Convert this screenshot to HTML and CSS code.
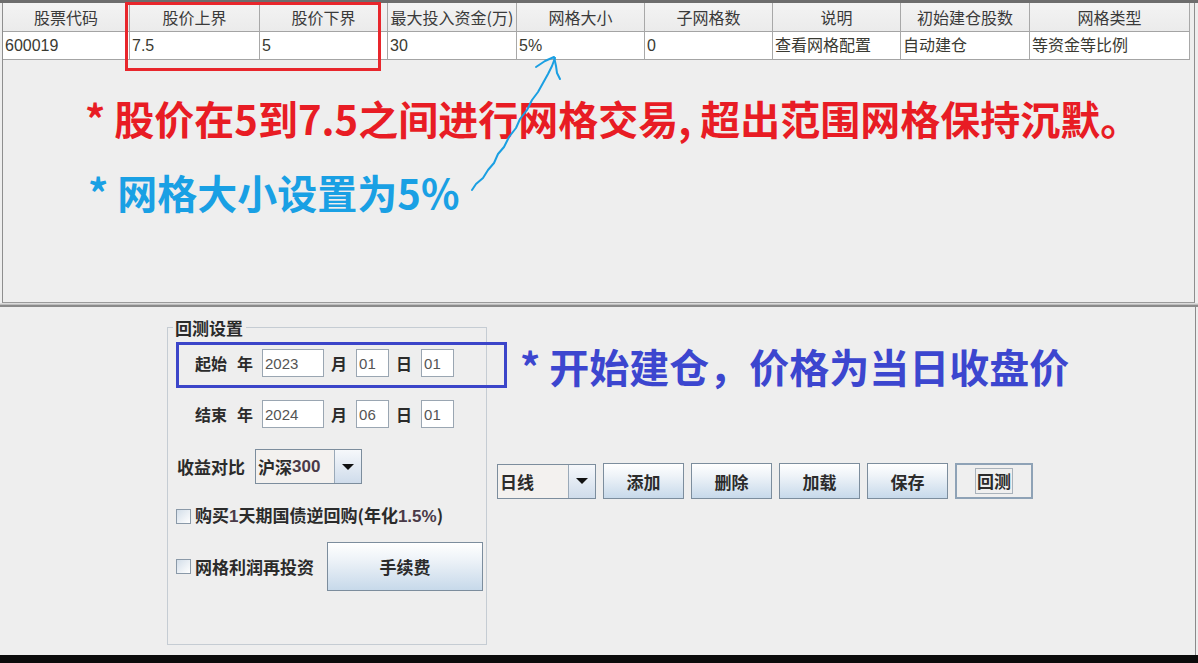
FILE: index.html
```html
<!DOCTYPE html>
<html lang="zh-CN">
<head>
<meta charset="utf-8">
<title>网格回测</title>
<link rel="stylesheet" href="styles.css">
</head>
<body>
<div class="app">
  <div class="top">
    <div class="scroll">
      <table class="grid">
        <colgroup>
          <col class="c1"><col class="c2"><col class="c3"><col class="c4"><col class="c5"><col class="c6"><col class="c7"><col class="c8"><col class="c9">
        </colgroup>
        <thead>
          <tr>
            <th>股票代码</th><th>股价上界</th><th>股价下界</th><th>最大投入资金(万)</th><th>网格大小</th><th>子网格数</th><th>说明</th><th>初始建仓股数</th><th>网格类型</th>
          </tr>
        </thead>
        <tbody>
          <tr>
            <td>600019</td><td>7.5</td><td>5</td><td>30</td><td>5%</td><td>0</td><td>查看网格配置</td><td>自动建仓</td><td>等资金等比例</td>
          </tr>
        </tbody>
      </table>
    </div>
  </div>
  <div class="divider"></div>
  <div class="bottom">
    <fieldset class="group">
      <legend class="legend">回测设置</legend>
      <div class="date-row first">
        <span class="lbl dlbl">起始</span>
        <span class="lbl dlbl unit-y">年</span>
        <input class="field year" value="2023">
        <span class="lbl dlbl unit">月</span>
        <input class="field small" value="01">
        <span class="lbl dlbl unit">日</span>
        <input class="field small" value="01">
      </div>
      <div class="date-row second">
        <span class="lbl dlbl">结束</span>
        <span class="lbl dlbl unit-y">年</span>
        <input class="field year" value="2024">
        <span class="lbl dlbl unit">月</span>
        <input class="field small" value="06">
        <span class="lbl dlbl unit">日</span>
        <input class="field small" value="01">
      </div>
      <div class="cmp-row">
        <span class="lbl">收益对比</span>
        <div class="combo bench">
          <span class="combo-text">沪深<span class="num">300</span></span>
          <span class="combo-btn"><span class="tri"></span></span>
        </div>
      </div>
      <div class="cb-row">
        <span class="cb"></span>
        <span class="lbl cb-lbl">购买<span class="num">1</span>天期国债逆回购(年化<span class="num">1.5%</span>)</span>
      </div>
      <div class="cb-row fee-row">
        <span class="cb"></span>
        <span class="lbl cb-lbl">网格利润再投资</span>
        <button class="btn fee">手续费</button>
      </div>
    </fieldset>
    <div class="toolbar">
      <div class="combo period">
        <span class="combo-text">日线</span>
        <span class="combo-btn"><span class="tri"></span></span>
      </div>
      <button class="btn">添加</button>
      <button class="btn">删除</button>
      <button class="btn">加载</button>
      <button class="btn">保存</button>
      <button class="btn focused"><span class="focus-ring">回测</span></button>
    </div>
  </div>
  <div class="taskbar"></div>

  <div class="mark red-box"></div>
  <div class="mark blue-box"></div>
  <div class="note note-red">* 股价在5到7.5之间进行网格交易, 超出范围网格保持沉默。</div>
  <div class="note note-cyan">* 网格大小设置为5%</div>
  <div class="note note-blue">* 开始建仓，价格为当日收盘价</div>
  <svg class="arrow" width="1198" height="663" viewBox="0 0 1198 663">
    <path d="M472 190 L476 184 L483 178 L488 170 L494 163 L498 154 L504 147 L509 137 L516 128 L520 119 L527 110 L532 100 L538 92 L543 83 L548 74 L552 66 L555 58" fill="none" stroke="#1a9fe2" stroke-width="2" stroke-linecap="round" stroke-linejoin="round"/>
    <path d="M536 67 L545 61 L554 57 L556 66 L557 73 L560 79" fill="none" stroke="#1a9fe2" stroke-width="2" stroke-linecap="round" stroke-linejoin="round"/>
  </svg>
</div>
</body>
</html>
```
FILE: styles.css
```css
* { box-sizing: border-box; }
html, body { margin: 0; padding: 0; }
body {
  width: 1198px;
  height: 663px;
  overflow: hidden;
  background: #eeeeee;
  font-family: "Noto Sans CJK SC", "Liberation Sans", sans-serif;
  color: #333;
}
.app {
  position: relative;
  width: 1198px;
  height: 663px;
  display: flex;
  flex-direction: column;
}
.top {
  border-top: 3px solid #6d6d6d;
  height: 303px;
}
.scroll {
  margin-left: 2px;
  width: 1193px;
  height: 300px;
  border-left: 1px solid #8e8e8e;
  border-right: 1px solid #8e8e8e;
  border-bottom: 1px solid #9a9a9a;
  background: #eeeeee;
}
.grid {
  table-layout: fixed;
  border-collapse: separate;
  border-spacing: 0;
  width: 1187px;
  font-size: 16px;
}
.c1 { width: 127px; }
.c2 { width: 130px; }
.c3 { width: 128px; }
.c4 { width: 129px; }
.c5 { width: 128px; }
.c6 { width: 128px; }
.c7 { width: 128px; }
.c8 { width: 129px; }
.c9 { width: 160px; }
.grid th {
  height: 29px;
  padding: 0 2px;
  font-weight: 400;
  color: #3a3a3a;
  background: linear-gradient(#f3f3f3, #ebebeb);
  border-right: 1px solid #a8a8a8;
  border-bottom: 1px solid #a4a4a4;
  text-align: center;
  white-space: nowrap;
  overflow: hidden;
  font-family: "Noto Sans CJK SC", sans-serif;
  line-height: 20px;
}
.grid td {
  height: 28px;
  padding: 0 2px;
  background: #ffffff;
  border-right: 1px solid #a8a8a8;
  border-bottom: 1px solid #a4a4a4;
  white-space: nowrap;
  overflow: hidden;
  color: #3a3a32;
  font-family: "Liberation Sans", "Noto Sans CJK SC", sans-serif;
  line-height: 20px;
}
.divider {
  height: 4px;
  border-top: 1px solid #dcdcdc;
  border-bottom: 2px solid #8a8a8a;
  background: #bdbdbd;
}
.bottom {
  height: 348px;
  display: flex;
  align-items: flex-start;
  border-right: 1px solid #8a8a8a;
  width: 1196px;
}
.group {
  margin: 13px 0 0 167px;
  padding: 0;
  width: 320px;
  height: 325px;
  border: 1px solid #c5ccd3;
  min-width: 0;
}
.legend {
  margin-left: 5px;
  padding: 0 3px 0 2px;
  font-size: 17px;
  font-weight: 700;
  line-height: 15px;
  color: #2a2a2a;
}
.lbl {
  font-size: 17px;
  font-weight: 700;
  color: #2b2b2b;
  white-space: nowrap;
  line-height: 20px;
}
.dlbl { font-size: 16px; }
.num { font-family: "Liberation Sans", sans-serif; color: #4a3a48; }
.date-row {
  display: flex;
  align-items: center;
  height: 28px;
  padding-left: 27px;
}
.date-row.first { margin-top: 14px; }
.date-row.second { margin-top: 23px; }
.unit-y { margin-left: 10px; }
.unit { margin-left: 7px; }
.field {
  height: 28px;
  margin-left: 9px;
  border: 1px solid #9aa6b2;
  background: #ffffff;
  font-family: "Liberation Sans", sans-serif;
  font-size: 15px;
  color: #555;
  padding: 0 2px;
}
.field.year { width: 62px; }
.field.small { width: 33px; }
.cmp-row {
  display: flex;
  align-items: center;
  margin-top: 21px;
  height: 35px;
  padding-left: 9px;
}
.combo {
  display: flex;
  height: 35px;
  border: 1px solid #7c8d9d;
  background: #f3f1ef;
}
.combo.bench { width: 107px; margin-left: auto; margin-right: 124px; }
.combo-text {
  flex: 1;
  display: flex;
  align-items: center;
  padding-left: 2px;
  font-size: 17px;
  font-weight: 700;
  color: #2b2b2b;
  white-space: nowrap;
}
.combo-btn {
  width: 27px;
  border-left: 1px solid #9aa9b8;
  background: linear-gradient(#f6f8fb, #cfdceb);
  display: flex;
  align-items: center;
  justify-content: center;
}
.tri {
  width: 0;
  height: 0;
  border-left: 6px solid transparent;
  border-right: 6px solid transparent;
  border-top: 6px solid #111;
}
.cb-row {
  display: flex;
  align-items: center;
  margin-top: 22px;
  height: 20px;
  padding-left: 8px;
  padding-right: 3px;
}
.cb-row.fee-row { margin-top: 16px; height: 49px; }
.cb {
  width: 15px;
  height: 15px;
  flex: none;
  border: 1px solid #8a99a8;
  background: linear-gradient(135deg, #d3dee9, #ffffff);
}
.cb-lbl { margin-left: 4px; }
.btn {
  height: 36px;
  width: 81px;
  padding: 0;
  border: 1px solid #7c8d9d;
  background: linear-gradient(#ffffff 0%, #eef3f8 35%, #c7d9ea 100%);
  font-family: "Noto Sans CJK SC", sans-serif;
  font-size: 17px;
  font-weight: 700;
  color: #2b2b2b;
}
.btn.fee {
  width: 156px;
  height: 49px;
  margin-left: auto;
}
.toolbar {
  display: flex;
  gap: 7px;
  margin: 156px 0 0 10px;
  align-items: center;
}
.combo.period { width: 99px; height: 35px; }
.btn.focused {
  width: 78px;
  border: 2px solid #8ea2b6;
  background: #efefef;
  display: flex;
  align-items: center;
  justify-content: center;
}
.focus-ring {
  border: 1px solid #a9b2bb;
  padding: 0 1px;
  line-height: 24px;
}
.taskbar {
  height: 8px;
  background: #0b0b0b;
}
.mark {
  position: absolute;
  border-style: solid;
  border-width: 3px;
}
.red-box { left: 125px; top: 2px; width: 256px; height: 69px; border-color: #e8262c; }
.blue-box { left: 176px; top: 342px; width: 331px; height: 46px; border-color: #3b45c9; }
.note {
  position: absolute;
  font-family: "Noto Sans CJK SC", sans-serif;
  font-weight: 700;
  font-size: 40px;
  line-height: 46px;
  white-space: nowrap;
}
.note-red { left: 85px; top: 95px; color: #e81c24; }
.note-cyan { left: 88px; top: 169px; color: #19a0e4; }
.note-blue { left: 520px; top: 343px; color: #3c46cf; }
.arrow { position: absolute; left: 0; top: 0; pointer-events: none; }
```
